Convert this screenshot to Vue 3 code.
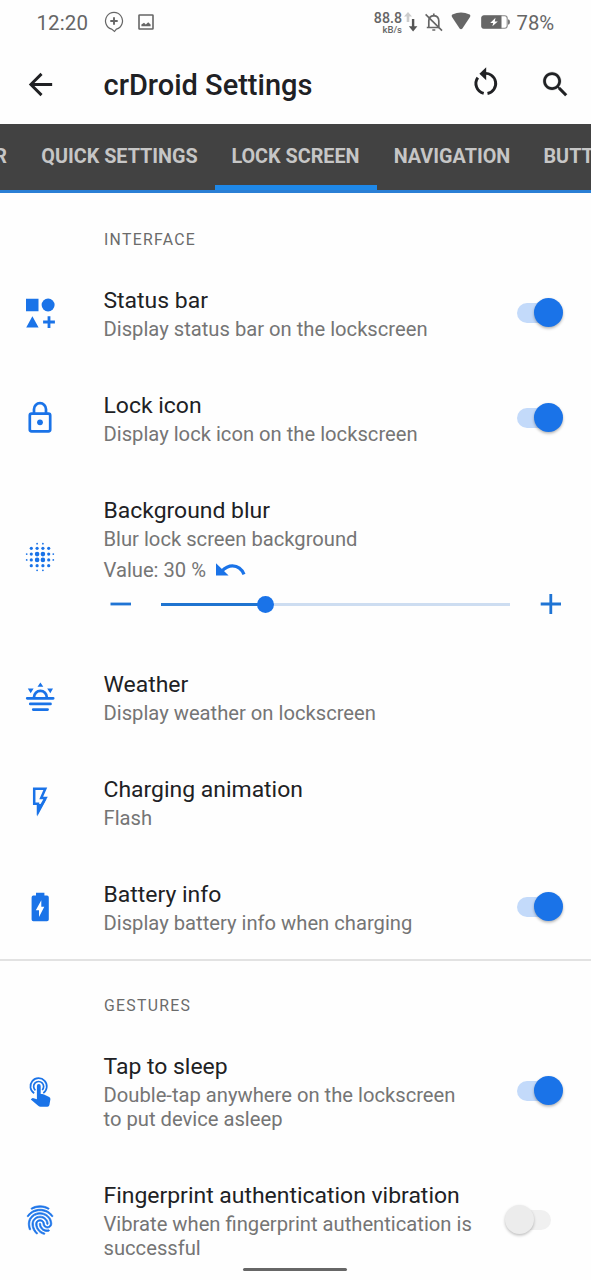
<script setup>
const tabs = [
  { label: 'STATUS BAR', width: 108.5, side: 'before' },
  { label: 'QUICK SETTINGS', width: 190 },
  { label: 'LOCK SCREEN', width: 162, active: true },
  { label: 'NAVIGATION', width: 151 },
  { label: 'BUTTONS', width: 130, side: 'after' },
]

const sections = [
  {
    title: 'INTERFACE',
    rows: [
      { icon: 'shapes', title: 'Status bar', summary: 'Display status bar on the lockscreen', toggle: 'on' },
      { icon: 'lock', title: 'Lock icon', summary: 'Display lock icon on the lockscreen', toggle: 'on' },
      { icon: 'blur', title: 'Background blur', summary: 'Blur lock screen background', slider: 30 },
      { icon: 'weather', title: 'Weather', summary: 'Display weather on lockscreen' },
      { icon: 'flash', title: 'Charging animation', summary: 'Flash' },
      { icon: 'battery', title: 'Battery info', summary: 'Display battery info when charging', toggle: 'on' },
    ],
  },
  {
    title: 'GESTURES',
    rows: [
      { icon: 'tap', title: 'Tap to sleep', summary: 'Double-tap anywhere on the lockscreen\nto put device asleep', toggle: 'on', tall: true },
      { icon: 'finger', title: 'Fingerprint authentication vibration', summary: 'Vibrate when fingerprint authentication is\nsuccessful', toggle: 'off', tall: true },
    ],
  },
]

const steps = [-8.7, -2.9, 2.9, 8.7]
const dots = []
for (const x of steps) {
  for (const y of steps) {
    const inner = Math.abs(x) < 5 && Math.abs(y) < 5
    dots.push({ x: 18 + x, y: 18 + y, r: inner ? 2.3 : 1.6 })
  }
}
for (const a of [-2.9, 2.9]) {
  for (const b of [-13.3, 13.3]) {
    dots.push({ x: 18 + a, y: 18 + b, r: 0.9 }, { x: 18 + b, y: 18 + a, r: 0.9 })
  }
}
</script>

<template>
  <div class="screen">
    <header class="status">
      <span class="clock">12:20</span>
      <svg class="s-bubble" width="20" height="22" viewBox="0 0 20 22" fill="none" stroke="#666" stroke-width="1.2">
        <path d="M7.6 18.1A8.5 8.5 0 1 1 12.4 18.1L10.5 20.5Z" />
        <path d="M10 6.3v7.4M6.3 10h7.4" stroke-width="1.9" />
      </svg>
      <svg class="s-image" width="16" height="16" viewBox="0 0 16 16">
        <rect x="1" y="1" width="14" height="14" rx=".6" fill="none" stroke="#666" stroke-width="1.6" />
        <path d="M3.4 12.2V10.4L6 8.7 7.8 10.5 10.2 8.2 12.6 10.5V12.2Z" fill="#666" />
      </svg>
      <div class="speed"><b>88.8</b><span>kB/s</span></div>
      <svg class="s-arrows" width="16" height="22" viewBox="0 0 16 22">
        <path d="M5 1 9 5.5H6.3V11H3.7V5.5H1Z" fill="#ccc" />
        <path d="M8.9 8h2.4v7.2H14.4L10.1 20.5 5.8 15.2H8.9Z" fill="#555" />
      </svg>
      <svg class="s-bell" width="20" height="20" viewBox="0 0 20 20" fill="none" stroke="#666" stroke-width="1.7">
        <path d="M4.8 15.1V9c0-3 1.8-5.2 5-5.4 3.2.2 5 2.4 5 5.4v6.1M2.8 15.5H15M9.8 1.5V4M8.3 18h3" />
        <path d="M1.6 2.4 18 18.6" stroke-width="1.6" />
      </svg>
      <svg class="s-wifi" width="20" height="18" viewBox="0 0 20 18">
        <path d="M1.4 2.6Q10-1.6 18.6 2.6 19.8 3.4 19 5L11.4 16.4Q10 18 8.6 16.4L1 5Q.2 3.4 1.4 2.6Z" fill="#666" />
      </svg>
      <svg class="s-batt" width="30" height="14" viewBox="0 0 30 14">
        <rect x=".8" y=".8" width="25.4" height="12.4" rx="2.5" fill="#fff" stroke="#888" stroke-width="1.1" />
        <path d="M3 .4H20.5V13.6H3Q.4 13.6.4 11V3Q.4.4 3 .4Z" fill="#666" />
        <path d="M27 4.2Q29 4.4 29 7T27 9.8Z" fill="#777" />
        <path d="M14.5 2.8 9.2 8H12.2L11.4 11.2 16.8 6.4H13.8Z" fill="#fff" />
      </svg>
      <span class="percent">78%</span>
    </header>

    <div class="toolbar">
      <svg class="back" width="35" height="35" viewBox="0 0 24 24" fill="#202124">
        <path d="M20 11H7.83l5.59-5.59L12 4l-8 8 8 8 1.41-1.41L7.83 13H20v-2z" />
      </svg>
      <h1>crDroid Settings</h1>
      <svg class="reset" width="36" height="36" viewBox="0 0 36 36" fill="none" stroke="#202124" stroke-width="2.9">
        <path d="M15.6 8.6A10.1 10.1 0 0 1 19.5 28.5" />
        <path d="M15.7 28.3A10.1 10.1 0 0 1 9.8 12.6" />
        <path d="M18.2 2.2V15.2L11.4 8.8Z" fill="#202124" stroke="none" />
      </svg>
      <svg class="search" width="33" height="33" viewBox="0 0 24 24" fill="#202124" stroke="#202124" stroke-width=".15">
        <path d="M15.5 14h-.79l-.28-.27C15.41 12.59 16 11.11 16 9.5 16 5.91 13.09 3 9.5 3S3 5.91 3 9.5 5.91 16 9.5 16c1.61 0 3.09-.59 4.23-1.57l.27.28v.79l5 4.99L20.49 19l-4.99-5zm-6 0C7.01 14 5 11.99 5 9.5S7.01 5 9.5 5 14 7.01 14 9.5 11.99 14 9.5 14z" />
      </svg>
    </div>

    <nav class="tabs">
      <div v-for="t in tabs" :key="t.label" class="tab" :class="[t.side, { active: t.active }]" :style="{ width: t.width + 'px' }">
        <span>{{ t.label }}</span>
      </div>
    </nav>

    <section v-for="s in sections" :key="s.title" class="section">
      <h2>{{ s.title }}</h2>
      <div v-for="r in s.rows" :key="r.title" class="row" :class="{ tall: r.tall, sliding: r.slider }">
        <svg class="icon" width="36" height="36" viewBox="0 0 36 36" fill="#1a73e8">
          <template v-if="r.icon === 'shapes'">
            <path d="M4 3.8H16.5V16.3H4ZM10.4 21.2 16.6 32.4H4.2ZM25.6 21.2h2.8v4.4h4.5v2.8h-4.5v4.5h-2.8v-4.5h-4.5v-2.8h4.5Z" />
            <circle cx="26.1" cy="10" r="6.5" />
          </template>
          <template v-else-if="r.icon === 'lock'">
            <g fill="none" stroke="#1a73e8" stroke-width="2.7">
              <rect x="7.8" y="13.6" width="20.4" height="17.8" rx="1.8" />
              <path d="M12 13.4V9.2a6 6 0 0 1 12 0v4.2" />
            </g>
            <circle cx="18" cy="22.3" r="2.9" />
          </template>
          <template v-else-if="r.icon === 'blur'">
            <circle v-for="(d, i) in dots" :key="i" :cx="d.x" :cy="d.y" :r="d.r" />
          </template>
          <template v-else-if="r.icon === 'weather'">
            <path d="M18.4 3.4 21.3 7.8H15.5ZM5.8 9.4H11.6L8.7 14.2ZM25.2 9.4H31L28.3 14.2Z" />
            <path d="M5.2 19.3H31.2M8.3 24.9H28.5M11.2 30.6H25.6M12 18.8v-.6a6.4 6.4 0 0 1 12.8 0v.6" fill="none" stroke="#1a73e8" stroke-width="2.7" stroke-linecap="round" />
          </template>
          <template v-else-if="r.icon === 'flash'">
            <path d="M12.2 4.8H23.3L19.2 14H23.6L16 27V19.7H12.2Z" fill="none" stroke="#1a73e8" stroke-width="2.5" />
            <path d="M15.1 20H19L24.6 15.1 15.2 32.6Z" />
          </template>
          <template v-else-if="r.icon === 'battery'">
            <path d="M14 3.8H22.4V6.6H25Q26.8 6.6 26.8 8.4V30.5Q26.8 32.2 25 32.2H11.3Q9.6 32.2 9.6 30.5V8.4Q9.6 6.6 11.3 6.6H14Z" />
            <path d="M19.3 11.3V17.8H22.3L17 28.1V21.2H13.8Z" fill="#fff" />
          </template>
          <template v-else-if="r.icon === 'tap'">
            <g fill="none" stroke="#1a73e8" stroke-width="1.7">
              <path d="M12.2 20.3A8.2 8.2 0 1 1 21.3 20.1" />
              <path d="M13.4 17.3A5 5 0 1 1 20.2 17" />
            </g>
            <path d="M14.9 13a1.9 1.9 0 0 1 3.8 0V21H20.2Q21 21 22 21.5L27.2 24Q28.6 24.8 28.4 26.3L27.4 32Q27.1 33.8 25.4 33.8H18.5Q17.2 33.8 16.2 32.8L8.8 26.4 9.8 25.4Q10.5 24.8 11.6 25.2L14.9 26.3Z" />
          </template>
          <path v-else transform="translate(.9 .9) scale(1.43)" stroke="#1a73e8" stroke-width=".5" d="M17.81 4.47c-.08 0-.16-.02-.23-.06C15.66 3.42 14 3 12.01 3c-1.98 0-3.86.47-5.57 1.41-.24.13-.54.04-.68-.2-.13-.24-.04-.55.2-.68C7.82 2.52 9.86 2 12.01 2c2.13 0 3.99.47 6.03 1.52.25.13.34.43.21.67-.09.18-.26.28-.44.28zM3.5 9.72c-.1 0-.2-.03-.29-.09-.23-.16-.28-.47-.12-.7.99-1.4 2.25-2.5 3.75-3.27C9.98 4.04 14 4.03 17.15 5.65c1.5.77 2.76 1.86 3.75 3.25.16.22.11.54-.12.7-.23.16-.54.11-.7-.12-.9-1.26-2.04-2.25-3.39-2.94-2.87-1.47-6.54-1.47-9.4.01-1.36.7-2.5 1.7-3.4 2.96-.08.14-.23.21-.39.21zm6.25 12.07c-.13 0-.26-.05-.35-.15-.87-.87-1.34-1.43-2.01-2.64-.69-1.23-1.05-2.73-1.05-4.34 0-2.97 2.54-5.39 5.66-5.39s5.66 2.42 5.66 5.39c0 .28-.22.5-.5.5s-.5-.22-.5-.5c0-2.42-2.09-4.39-4.66-4.39-2.57 0-4.66 1.97-4.66 4.39 0 1.44.32 2.77.93 3.85.64 1.15 1.08 1.64 1.85 2.42.19.2.19.51 0 .71-.11.1-.24.15-.37.15zm7.17-1.85c-1.19 0-2.24-.3-3.1-.89-1.49-1.01-2.38-2.65-2.38-4.39 0-.28.22-.5.5-.5s.5.22.5.5c0 1.41.72 2.74 1.94 3.56.71.48 1.54.71 2.54.71.24 0 .64-.03 1.04-.1.27-.05.53.13.58.41.05.27-.13.53-.41.58-.57.11-1.07.12-1.21.12zM14.91 22c-.04 0-.09-.01-.13-.02-1.59-.44-2.63-1.03-3.72-2.1-1.4-1.39-2.17-3.24-2.17-5.22 0-1.62 1.38-2.94 3.08-2.94 1.7 0 3.08 1.32 3.08 2.94 0 1.07.93 1.94 2.08 1.94s2.08-.87 2.08-1.94c0-3.77-3.25-6.83-7.25-6.83-2.84 0-5.44 1.58-6.61 4.03-.39.81-.59 1.76-.59 2.8 0 .78.07 2.01.67 3.61.1.26-.03.55-.29.64-.26.1-.55-.04-.64-.29-.49-1.31-.73-2.61-.73-3.96 0-1.2.23-2.29.68-3.24 1.33-2.79 4.28-4.6 7.51-4.6 4.55 0 8.25 3.51 8.25 7.83 0 1.62-1.38 2.94-3.08 2.94s-3.08-1.32-3.08-2.94c0-1.07-.93-1.94-2.08-1.94s-2.08.87-2.08 1.94c0 1.71.66 3.31 1.87 4.51.95.94 1.86 1.46 3.27 1.85.27.07.42.35.35.61-.05.23-.26.38-.47.38z" />
        </svg>

        <div class="body">
          <div class="title">{{ r.title }}</div>
          <div class="summary">{{ r.summary }}</div>
          <template v-if="r.slider">
            <div class="value">
              <span>Value: {{ r.slider }} %</span>
              <svg width="32" height="16" viewBox="0 0 32 16">
                <path d="M1 1.2V13.6H13.6Z" fill="#1a73e8" />
                <path d="M6.5 9.3Q12 3.9 17.5 3.9 25.5 4 29 12.4" fill="none" stroke="#1a73e8" stroke-width="3.2" />
              </svg>
            </div>
            <div class="slider">
              <svg width="22" height="22" viewBox="0 0 22 22"><path d="M.5 11H21" stroke="#1f74d4" stroke-width="2.8" /></svg>
              <div class="track">
                <div class="fill" :style="{ width: r.slider + '%' }"><i /></div>
              </div>
              <svg width="22" height="22" viewBox="0 0 22 22"><path d="M.7 11H21M10.8 1V21" stroke="#1f74d4" stroke-width="2.8" /></svg>
            </div>
          </template>
        </div>

        <div v-if="r.toggle" class="switch" :class="r.toggle"><i /></div>
      </div>
    </section>
    <div class="home-bar" />
  </div>
</template>

<style>
body {
  margin: 0;
  overflow: hidden;
}
</style>

<style scoped>
.screen {
  position: relative;
  width: 591px;
  height: 1280px;
  overflow: hidden;
  background: #fefefe;
  color: #202124;
  font-family: Roboto, "Liberation Sans", sans-serif;
}
svg {
  display: block;
  flex: none;
}
.status {
  display: flex;
  align-items: flex-start;
  height: 45px;
  color: #666;
}
.clock {
  margin: 11px 0 0 36.5px;
  width: 67.5px;
  font-size: 20.5px;
  line-height: 25px;
  letter-spacing: 0.1px;
}
.s-bubble { margin-top: 11px; }
.s-image { margin: 14px 0 0 13.5px; }
.speed {
  margin: 11px 0 0 218.5px;
  width: 30px;
  text-align: right;
  display: flex;
  flex-direction: column;
}
.speed b {
  font-size: 14.2px;
  line-height: 14px;
  font-weight: 500;
}
.speed span {
  font-size: 9.5px;
  line-height: 9px;
  font-weight: 500;
}
.s-arrows { margin: 11px 0 0 1px; }
.s-bell { margin: 12px 0 0 4.5px; }
.s-wifi { margin: 12px 0 0 7.5px; }
.s-batt { margin: 15px 0 0 9.5px; }
.percent {
  margin: 11px 0 0 6px;
  font-size: 20.3px;
  line-height: 25px;
}
.toolbar {
  display: flex;
  align-items: center;
  height: 79px;
}
.back { margin-left: 22.5px; }
h1 {
  margin: 0 0 0 46px;
  width: 364px;
  font-size: 29px;
  font-weight: 500;
  line-height: 36px;
  white-space: nowrap;
}
.reset { margin-top: -3px; }
.search { margin: -1px 0 0 35px; }
.tabs {
  display: flex;
  box-sizing: border-box;
  height: 69px;
  margin-left: -84px;
  width: 675px;
  overflow: hidden;
  background: #424242;
  border-bottom: 3px solid #2a7fd5;
}
.tab {
  flex: none;
  box-sizing: border-box;
  height: 66px;
  padding-bottom: 1px;
  display: flex;
  align-items: center;
  justify-content: center;
  color: #c6c6c6;
  font-size: 19.8px;
  font-weight: 700;
  white-space: nowrap;
}
.before {
  justify-content: flex-end;
  padding-right: 17.5px;
}
.after {
  justify-content: flex-start;
  padding-left: 16px;
}
.active {
  padding-bottom: 0;
  border-bottom: 5px solid #1e88e8;
}
.active span { margin-top: 4px; }
.section + .section { border-top: 2px solid #e2e2e2; }
h2 {
  margin: 0;
  padding-left: 104px;
  height: 67px;
  box-sizing: border-box;
  padding-top: 37px;
  font-size: 15.8px;
  line-height: 20px;
  letter-spacing: 1.3px;
  font-weight: 400;
  color: #6b6b6b;
}
.section + .section h2 { padding-top: 35px; height: 65px; }
.row {
  display: flex;
  align-items: center;
  height: 105px;
}
.tall { height: 129px; }
.sliding { height: 174px; }
.icon { margin-left: 22px; }
.body {
  margin-left: 45.5px;
  width: 400px;
  padding-top: 1px;
}
.title {
  font-size: 22.95px;
  line-height: 30px;
  white-space: nowrap;
}
.summary {
  font-size: 20.2px;
  line-height: 24px;
  color: #757575;
  white-space: pre;
  margin-top: 1px;
}
.sliding .body {
  width: 460px;
  padding-top: 6px;
}
.value {
  display: flex;
  align-items: center;
  margin-top: 5px;
  font-size: 20.2px;
  line-height: 28px;
  color: #757575;
}
.value svg { margin: -1px 0 0 8.5px; }
.slider {
  display: flex;
  align-items: center;
  height: 40px;
  margin-left: 6px;
}
.track {
  width: 349px;
  height: 3px;
  margin: 0 30px 0 29px;
  background: #cdddf1;
}
.fill {
  position: relative;
  height: 3px;
  background: #1f74d0;
}
.fill i {
  position: absolute;
  right: -8.5px;
  top: -7px;
  width: 17px;
  height: 17px;
  border-radius: 50%;
  background: #1a73e8;
}
.switch {
  position: relative;
  width: 34px;
  height: 20px;
  margin-left: 13.8px;
  border-radius: 10px;
  background: #c3dafa;
}
.switch i {
  position: absolute;
  top: -4.5px;
  left: 16.5px;
  width: 29px;
  height: 29px;
  border-radius: 50%;
  background: #1a73e8;
  box-shadow: 0 1.5px 3px rgba(0, 0, 0, 0.3);
}
.off { background: #f0f0f0; }
.off i {
  left: -12px;
  background: #ececec;
  box-shadow: 0 1.5px 3px rgba(0, 0, 0, 0.25);
}
.home-bar {
  position: absolute;
  left: 243px;
  top: 1268px;
  width: 104px;
  height: 3px;
  border-radius: 2px;
  background: #666;
}
</style>
